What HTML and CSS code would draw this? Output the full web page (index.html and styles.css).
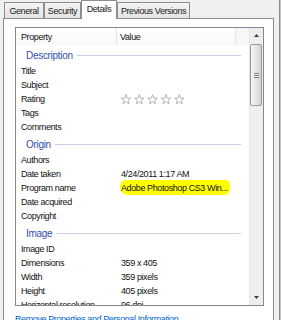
FILE: index.html
```html
<!DOCTYPE html>
<html>
<head>
<meta charset="utf-8">
<link rel="stylesheet" href="styles.css">
</head>
<body>
<div class="dialog">
  <div class="tabs">
    <div class="tab t-general">General</div>
    <div class="tab t-security">Security</div>
    <div class="tab t-details selected">Details</div>
    <div class="tab t-prev">Previous Versions</div>
  </div>
  <div class="panel">
    <div class="listbox">
      <div class="list-main">
        <div class="header">
          <div class="hcell hprop">Property</div>
          <div class="hcell hval">Value</div>
          <div class="hcell hrest"></div>
        </div>
        <div class="group"><span class="gtext">Description</span><span class="gline"></span></div>
        <div class="row"><span class="prop">Title</span><span class="val"></span></div>
        <div class="row"><span class="prop">Subject</span><span class="val"></span></div>
        <div class="row"><span class="prop">Rating</span><span class="val stars">
          <svg width="64" height="11" viewBox="0 0 64 11">
            <defs><polygon id="st" points="0,-5 1.234,-1.699 4.755,-1.545 1.997,0.649 2.939,4.045 0,2.1 -2.939,4.045 -1.997,0.649 -4.755,-1.545 -1.234,-1.699"/></defs>
            <g fill="#fff" stroke="#a3a3a3" stroke-width="0.8" stroke-linejoin="round">
              <use href="#st" x="5" y="5.7"/>
              <use href="#st" x="18.3" y="5.7"/>
              <use href="#st" x="31.6" y="5.7"/>
              <use href="#st" x="45" y="5.7"/>
              <use href="#st" x="58.3" y="5.7"/>
            </g>
          </svg></span></div>
        <div class="row"><span class="prop">Tags</span><span class="val"></span></div>
        <div class="row"><span class="prop">Comments</span><span class="val"></span></div>
        <div class="group"><span class="gtext">Origin</span><span class="gline"></span></div>
        <div class="row"><span class="prop">Authors</span><span class="val"></span></div>
        <div class="row"><span class="prop">Date taken</span><span class="val">4/24/2011 1:17 AM</span></div>
        <div class="row"><span class="prop">Program name</span><span class="val"><span class="hl">Adobe Photoshop CS3 Win...</span></span></div>
        <div class="row"><span class="prop">Date acquired</span><span class="val"></span></div>
        <div class="row"><span class="prop">Copyright</span><span class="val"></span></div>
        <div class="group"><span class="gtext">Image</span><span class="gline"></span></div>
        <div class="row"><span class="prop">Image ID</span><span class="val"></span></div>
        <div class="row"><span class="prop">Dimensions</span><span class="val">359 x 405</span></div>
        <div class="row"><span class="prop">Width</span><span class="val">359 pixels</span></div>
        <div class="row"><span class="prop">Height</span><span class="val">405 pixels</span></div>
        <div class="row"><span class="prop">Horizontal resolution</span><span class="val">96 dpi</span></div>
      </div>
      <div class="scrollbar">
        <div class="sbtn"><svg width="5" height="3" viewBox="0 0 5 3"><polygon points="2.5,0 5,3 0,3" fill="#404040"/></svg></div>
        <div class="thumb"><div class="grip"></div></div>
        <div class="track"></div>
        <div class="sbtn"><svg width="5" height="3" viewBox="0 0 5 3"><polygon points="0,0 5,0 2.5,3" fill="#404040"/></svg></div>
      </div>
    </div>
    <a class="link" href="#">Remove Properties and Personal Information</a>
  </div>
</div>
<div class="edge"></div>
</body>
</html>
```
FILE: styles.css
```css
html, body {
  margin: 0;
  padding: 0;
}
body {
  width: 281px;
  height: 320px;
  overflow: hidden;
  background: #f0f0f0;
  display: flex;
  font-family: "Liberation Sans", Arial, sans-serif;
  font-size: 9px;
  letter-spacing: -0.4px;
  color: #111;
}
.dialog {
  width: 279px;
  box-sizing: border-box;
  padding: 0 5px 0 3px;
  display: flex;
  flex-direction: column;
}
.edge {
  width: 2px;
  box-sizing: border-box;
  border-left: 1px solid #8a8a8a;
  background: #c4c4c4;
}
.tabs {
  display: flex;
  align-items: flex-end;
  height: 19px;
  padding-left: 1px;
  position: relative;
  z-index: 1;
}
.tab {
  height: 16px;
  box-sizing: border-box;
  border: 1px solid #8c8e94;
  border-bottom: none;
  padding-top: 1px;
  line-height: 14px;
  text-align: center;
  background: linear-gradient(#f4f4f4, #e3e3e3);
  color: #1a1a1a;
  white-space: nowrap;
}
.t-general { width: 40px; }
.t-security { width: 37px; }
.t-details { width: 36px; }
.t-prev { width: 73px; }
.tab.selected {
  height: 19px;
  margin-bottom: -1px;
  padding-top: 0;
  line-height: 16px;
  background: #fff;
}
.panel {
  flex: 1;
  background: #fff;
  border: 1px solid #898c95;
  border-bottom: none;
  padding: 8px 9px 0 11px;
  display: flex;
  flex-direction: column;
}
.listbox {
  height: 279px;
  box-sizing: border-box;
  border: 1px solid #828790;
  display: flex;
  overflow: hidden;
}
.list-main {
  width: 233px;
  overflow: hidden;
}
.header {
  display: flex;
  height: 17px;
  background: linear-gradient(#ffffff, #f8f9fa);
}
.hcell {
  box-sizing: border-box;
  padding-top: 2px;
  line-height: 15px;
  white-space: nowrap;
}
.hprop {
  width: 101px;
  padding-left: 5px;
  border-right: 1px solid #e2e4e7;
}
.hval {
  width: 119px;
  padding-left: 3px;
  border-right: 1px solid #e2e4e7;
}
.hrest {
  flex: 1;
  background: #f7f7f7;
}
.group {
  height: 19px;
  display: flex;
  align-items: center;
  padding: 0 8px 0 10px;
}
.gtext {
  font-size: 10px;
  letter-spacing: -0.3px;
  color: #3151ab;
  line-height: 19px;
  padding-top: 1px;
}
.gline {
  flex: 1;
  height: 1px;
  margin-left: 4px;
  margin-top: 1px;
  background: #c8d0ea;
}
.row {
  display: grid;
  grid-template-columns: 100px 1fr;
  height: 14px;
  line-height: 14px;
  white-space: nowrap;
}
.prop {
  padding-left: 5px;
  overflow: hidden;
}
.val {
  padding-left: 5px;
}
.stars {
  display: flex;
  align-items: center;
}
.hl {
  position: relative;
  z-index: 0;
}
.hl::before {
  content: "";
  position: absolute;
  left: -1px;
  right: -2px;
  top: -3px;
  bottom: -2px;
  background: #ffff00;
  border-radius: 6px 4px 5px 8px / 6px 5px 7px 8px;
  z-index: -1;
}
.scrollbar {
  width: 14px;
  display: flex;
  flex-direction: column;
  background: #eeeeee;
  border-left: 1px solid #e6e6e6;
  box-sizing: border-box;
}
.sbtn {
  height: 15px;
  display: flex;
  align-items: center;
  justify-content: center;
}
.thumb {
  height: 62px;
  margin: 1px 1px 0 0;
  box-sizing: border-box;
  border: 1px solid #9b9b9b;
  border-radius: 2px;
  background: linear-gradient(to right, #f6f6f6, #e6e6e6 50%, #d0d0d0);
  display: flex;
  align-items: center;
  justify-content: center;
}
.grip {
  width: 5px;
  height: 5px;
  background: repeating-linear-gradient(#7d7d7d 0 1px, #f0f0f0 1px 2px);
}
.track {
  flex: 1;
}
.link {
  margin-top: 8px;
  line-height: 11px;
  color: #0066cc;
  text-decoration: none;
  white-space: nowrap;
}
```
